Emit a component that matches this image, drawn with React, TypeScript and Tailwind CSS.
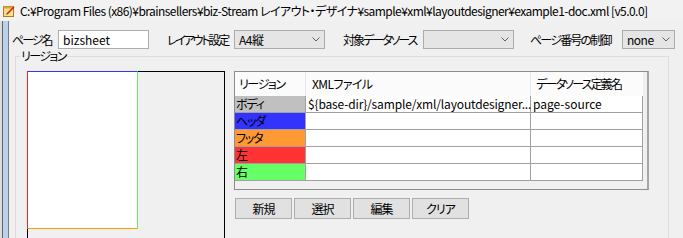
import React from 'react';

const rows = [
  { name: 'ボディ', bg: 'bg-[#c0c0c0]', xml: '${base-dir}/sample/xml/layoutdesigner...', src: 'page-source' },
  { name: 'ヘッダ', bg: 'bg-[#3333ff]', xml: '', src: '' },
  { name: 'フッタ', bg: 'bg-[#ff9933]', xml: '', src: '' },
  { name: '左', bg: 'bg-[#ff3333]', xml: '', src: '' },
  { name: '右', bg: 'bg-[#66ff66]', xml: '', src: '' },
];

function Chevron() {
  return (
    <svg width="8" height="5" viewBox="0 0 8 5" className="shrink-0">
      <path d="M0.5 0.5 L4 4 L7.5 0.5" fill="none" stroke="#606060" strokeWidth="1" />
    </svg>
  );
}

function Select({ value, w }: { value: string; w: string }) {
  return (
    <div className={`${w} h-[19px] bg-[#e5e5e5] border border-[#acacac] flex items-center justify-between pl-[4px] pr-[4px] shrink-0`}>
      <span className="tracking-[-0.5px]">{value}</span>
      <Chevron />
    </div>
  );
}

function TitleIcon() {
  return (
    <svg width="12" height="12" viewBox="0 0 12 12" className="shrink-0">
      <rect x="0.5" y="1.5" width="10" height="10" fill="#fbe08a" stroke="#b07a20" />
      <rect x="0.5" y="1.5" width="10" height="2" fill="#d9a640" />
      <path d="M4 9 L11 2" stroke="#d02020" strokeWidth="1.6" />
      <path d="M3.5 9.5 L4.5 8.5" stroke="#333" strokeWidth="1" />
    </svg>
  );
}

export default function App() {
  return (
    <div className="w-[683px] h-[238px] bg-[#f0f0f0] overflow-hidden flex flex-col text-[12px] leading-none text-black font-['Noto_Sans_CJK_JP',sans-serif] [font-feature-settings:'palt']">
      <div className="h-[21px] flex items-center pl-[3px] gap-[5px] shrink-0 bg-[#f2f2f2]">
        <TitleIcon />
        <span className="whitespace-nowrap text-[12px] tracking-[-0.55px]">
          C:¥Program Files (x86)¥brainsellers¥biz-Stream レイアウト・デザイナ¥sample¥xml¥layoutdesigner¥example1-doc.xml [v5.0.0]
        </span>
      </div>
      <div className="flex flex-1 min-h-0">
        <div className="flex shrink-0">
          <div className="w-[2px] bg-[#dcdcdc]" />
          <div className="w-[1px] bg-[#646464]" />
          <div className="w-[5px] bg-[#b9d1ea]" />
          <div className="w-[1px] bg-[#7a7a7a]" />
        </div>
        <div className="flex-1 flex flex-col min-w-0">
          <div className="flex items-center mt-[9px] h-[19px] pl-[3px] whitespace-nowrap">
            <span className="w-[46px] tracking-[-2px]">ページ名</span>
            <div className="w-[91px] h-[19px] bg-white border border-[#adadad] flex items-center pl-[4px] shrink-0">bizsheet</div>
            <span className="ml-[18px] w-[67px] tracking-[-2.2px]">レイアウト設定</span>
            <Select value="A4縦" w="w-[91px]" />
            <span className="ml-[18px] w-[80px] tracking-[-2px]">対象データソース</span>
            <Select value="" w="w-[91px]" />
            <span className="ml-[16px] w-[92px] tracking-[-1.8px]">ページ番号の制御</span>
            <Select value="none" w="w-[53px]" />
          </div>

          <div className="relative mt-[7px] ml-[6px] w-[654px] flex-1 border-t border-l border-r border-[#dcdcdc]">
            <span className="absolute -top-[7px] left-[4px] bg-[#f0f0f0] px-[1px] tracking-[-1.6px]">リージョン</span>
            <div className="flex mt-[14px] ml-[11px]">
              <div className="relative w-[198px] h-[200px] border-t border-l border-r border-black shrink-0">
                <div className="absolute -top-[1px] -left-[1px] w-[111px] h-[158px] bg-white border-t border-t-[#3333ff] border-l border-l-[#ff2020] border-r border-r-[#66ee66] border-b border-b-[#ff9900]" />
              </div>
              <div className="ml-[9px] flex flex-col">
                <div className="w-[415px] h-[119px] border border-[#8c8c8c] border-r-2 border-r-[#a6a6a6] bg-[#f0f0f0] flex flex-col">
                  <div className="flex h-[24px] bg-[#fbfbfb] w-[408px]">
                    <div className="w-[71px] flex items-center pl-[4px] border-r border-[#e6e6e6] tracking-[-1.4px]">リージョン</div>
                    <div className="w-[225px] flex items-center pl-[6px] border-r border-[#e6e6e6] tracking-[-0.6px]">XMLファイル</div>
                    <div className="w-[112px] flex items-center pl-[5px] tracking-[-1.8px]">データソース定義名</div>
                  </div>
                  {rows.map((r) => (
                    <div key={r.name} className="flex h-[17px] w-[408px] border-b border-[#a0a0a0]">
                      <div className={`w-[71px] ${r.bg} flex items-center pl-[1px] border-r border-[#a0a0a0] tracking-[-1.2px]`}>{r.name}</div>
                      <div className="w-[225px] bg-white flex items-center pl-[2px] border-r border-[#a0a0a0] whitespace-nowrap tracking-[-0.15px]">{r.xml}</div>
                      <div className="w-[112px] bg-white flex items-center pl-[2px] border-r border-[#a0a0a0]">{r.src}</div>
                    </div>
                  ))}
                </div>
                <div className="flex gap-[2px] mt-[8px] ml-[1px]">
                  {['新規', '選択', '編集', 'クリア'].map((b) => (
                    <div key={b} className="w-[57px] h-[21px] bg-[#e1e1e1] border border-[#adadad] flex items-center justify-center tracking-[-1px]">{b}</div>
                  ))}
                </div>
              </div>
            </div>
          </div>
        </div>
      </div>
    </div>
  );
}
